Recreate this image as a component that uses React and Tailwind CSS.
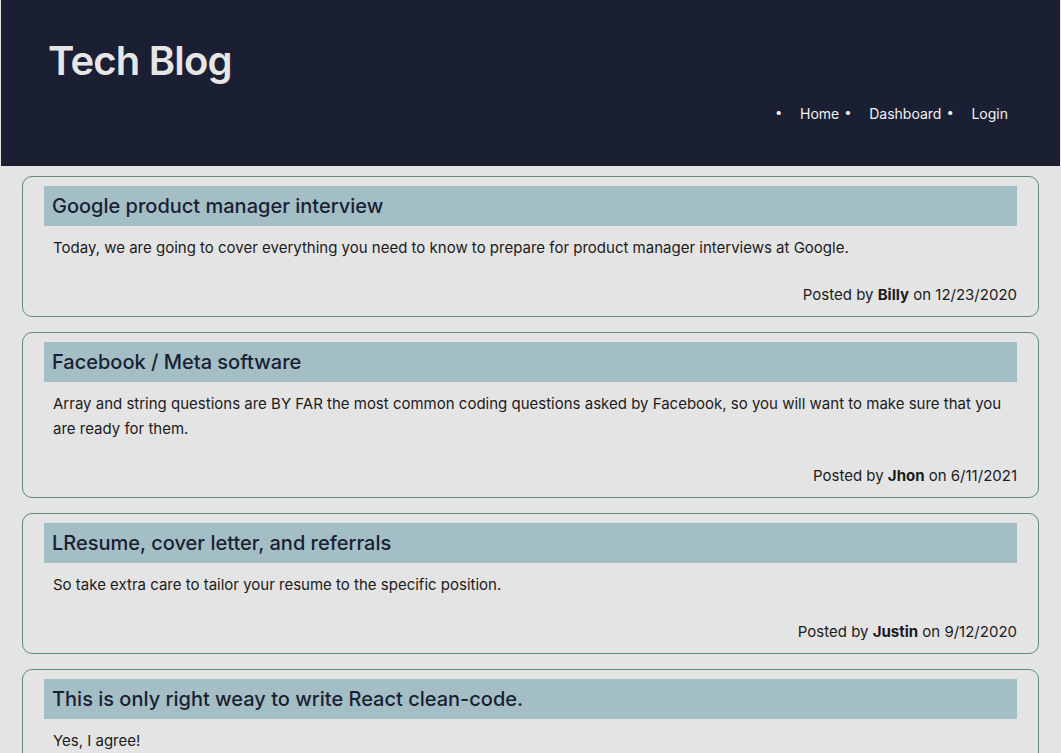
const posts = [
  {
    title: 'Google product manager interview',
    body: 'Today, we are going to cover everything you need to know to prepare for product manager interviews at Google.',
    author: 'Billy',
    date: '12/23/2020',
  },
  {
    title: 'Facebook / Meta software',
    body: 'Array and string questions are BY FAR the most common coding questions asked by Facebook, so you will want to make sure that you are ready for them.',
    author: 'Jhon',
    date: '6/11/2021',
  },
  {
    title: 'LResume, cover letter, and referrals',
    body: 'So take extra care to tailor your resume to the specific position.',
    author: 'Justin',
    date: '9/12/2020',
  },
  {
    title: 'This is only right weay to write React clean-code.',
    body: 'Yes, I agree!',
  },
];

function NavItem({ label }) {
  return (
    <li className="flex items-center">
      <span className="w-[27px] pl-[2px] text-[13px]">•</span>
      <span className="mr-[3px]">{label}</span>
    </li>
  );
}

function PostCard({ post }) {
  return (
    <article className="border border-[#5f8a7e] rounded-[10px] px-[21px] pt-[9px] pb-[10px]">
      <h2 className="bg-[#a3bec5] h-[40px] flex items-center px-[8px] text-[20px] font-medium text-[#1a1f33]">
        {post.title}
      </h2>
      <p className="mt-[9px] px-[9px] text-[15px] leading-[25px] text-[#1b1b1b]">{post.body}</p>
      {post.author && (
        <p className="mt-[23px] text-right text-[15px] leading-[23px] text-[#1b1b1b]">
          Posted by <b className="font-bold">{post.author}</b> on {post.date}
        </p>
      )}
    </article>
  );
}

export default function App() {
  return (
    <div className="min-h-screen bg-[#e4e4e4] font-['Inter',sans-serif]">
      <header className="mx-[1px] h-[166px] bg-[#1a1f33] flex justify-between px-[47px]">
        <h1 className="mt-[37px] text-[40px] leading-[48px] font-semibold tracking-[-0.8px] text-[#e6e6e6]">
          Tech Blog
        </h1>
        <ul className="mt-[102px] h-[22px] flex text-[14px] text-[#f2f2f2] mr-[2px]">
          <NavItem label="Home" />
          <NavItem label="Dashboard" />
          <NavItem label="Login" />
        </ul>
      </header>
      <main className="px-[22px] pt-[10px] flex flex-col gap-[15px] pb-[20px]">
        {posts.map((p) => (
          <PostCard key={p.title} post={p} />
        ))}
      </main>
    </div>
  );
}
